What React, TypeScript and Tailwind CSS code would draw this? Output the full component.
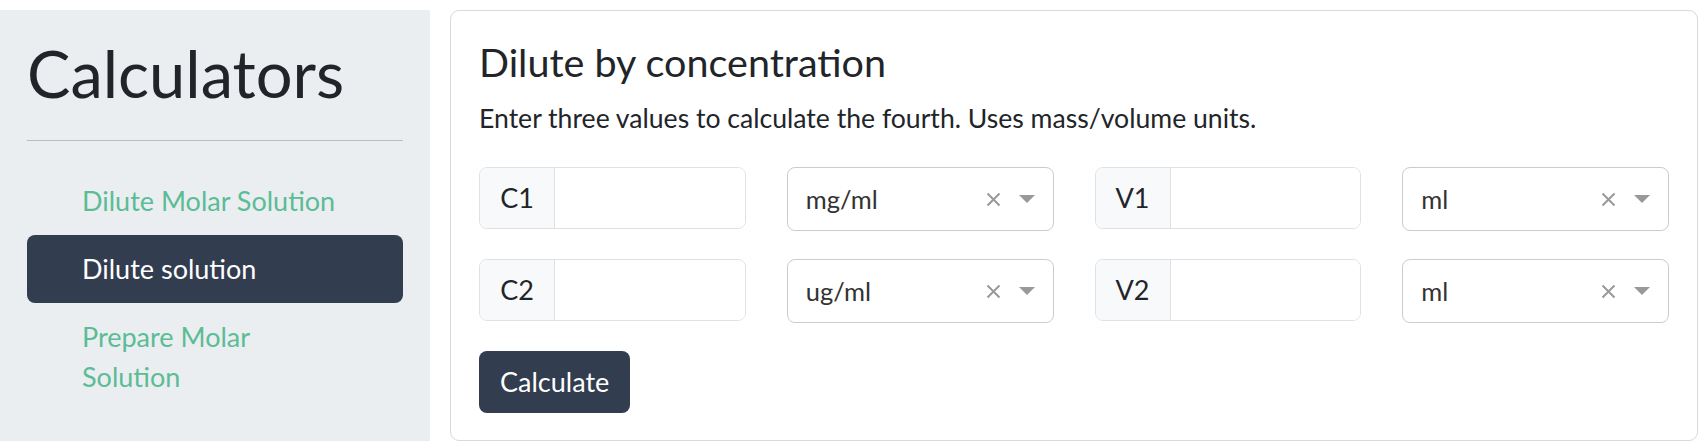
import React from "react";

function XIcon() {
  return (
    <svg width="15" height="15" viewBox="0 0 15 15" className="shrink-0">
      <path d="M1.5 1.5 L13.5 13.5 M13.5 1.5 L1.5 13.5" stroke="#999999" strokeWidth="2" strokeLinecap="butt" />
    </svg>
  );
}

function Caret() {
  return (
    <svg width="16" height="8" viewBox="0 0 16 8" className="shrink-0">
      <path d="M0 0 L16 0 L8 8 Z" fill="#999999" />
    </svg>
  );
}

function InputGroup({ label }: { label: string }) {
  return (
    <div className="flex h-[62px] rounded-[8px] border border-[#dee2e6] overflow-hidden">
      <div className="w-[75px] shrink-0 flex items-center justify-center bg-[#f8f9fa] border-r border-[#dee2e6] text-[27px] text-[#212529]">
        {label}
      </div>
      <input className="flex-1 min-w-0 bg-white outline-none px-3 text-[27px]" />
    </div>
  );
}

function UnitSelect({ value }: { value: string }) {
  return (
    <div className="flex items-center h-[64px] rounded-[8px] border border-[#cccccc] bg-white pl-[18px] pr-[18px]">
      <span className="flex-1 text-[25.5px] text-[#333333]">{value}</span>
      <div className="flex items-center gap-[18px]">
        <XIcon />
        <Caret />
      </div>
    </div>
  );
}

export default function App() {
  return (
    <div className="flex pt-[10px] pb-[8px] gap-[20px] pr-[8px] bg-white text-[#212529]" style={{ fontFamily: "Lato, 'Noto Sans', sans-serif" }}>
      <aside className="w-[430px] shrink-0 bg-[#ebeef0] px-[27px] pt-[24px]">
        <h1 className="text-[65px] leading-[1.2] font-normal text-[#212529]">Calculators</h1>
        <hr className="mt-[28px] border-0 border-t border-[#b9bdc0]" />
        <nav className="mt-[26px] flex flex-col">
          <a className="block px-[55px] py-[14px] text-[27px] leading-[40px] text-[#5bbc96]">Dilute Molar Solution</a>
          <a className="block px-[55px] py-[14px] text-[27px] leading-[40px] text-white bg-[#323d4f] rounded-[8px]">Dilute solution</a>
          <a className="block px-[55px] py-[14px] text-[27px] leading-[40px] text-[#5bbc96]">Prepare Molar Solution</a>
        </nav>
      </aside>
      <main className="flex-1 border border-[#d9d9d9] rounded-[9px] pl-[28px] pr-[28px] pt-[27px] pb-[27px]">
        <h4 className="text-[39.5px] leading-[1.2] font-normal">Dilute by concentration</h4>
        <p className="mt-[13px] text-[26.6px] leading-[40px]">Enter three values to calculate the fourth. Uses mass/volume units.</p>
        <div className="mt-[29px] grid grid-cols-4 gap-x-[41px] gap-y-[28px] items-start">
          <InputGroup label="C1" />
          <UnitSelect value="mg/ml" />
          <InputGroup label="V1" />
          <UnitSelect value="ml" />
          <InputGroup label="C2" />
          <UnitSelect value="ug/ml" />
          <InputGroup label="V2" />
          <UnitSelect value="ml" />
        </div>
        <button className="mt-[28px] h-[62px] px-[21px] rounded-[8px] bg-[#323d4f] text-white text-[27px]">Calculate</button>
      </main>
    </div>
  );
}
